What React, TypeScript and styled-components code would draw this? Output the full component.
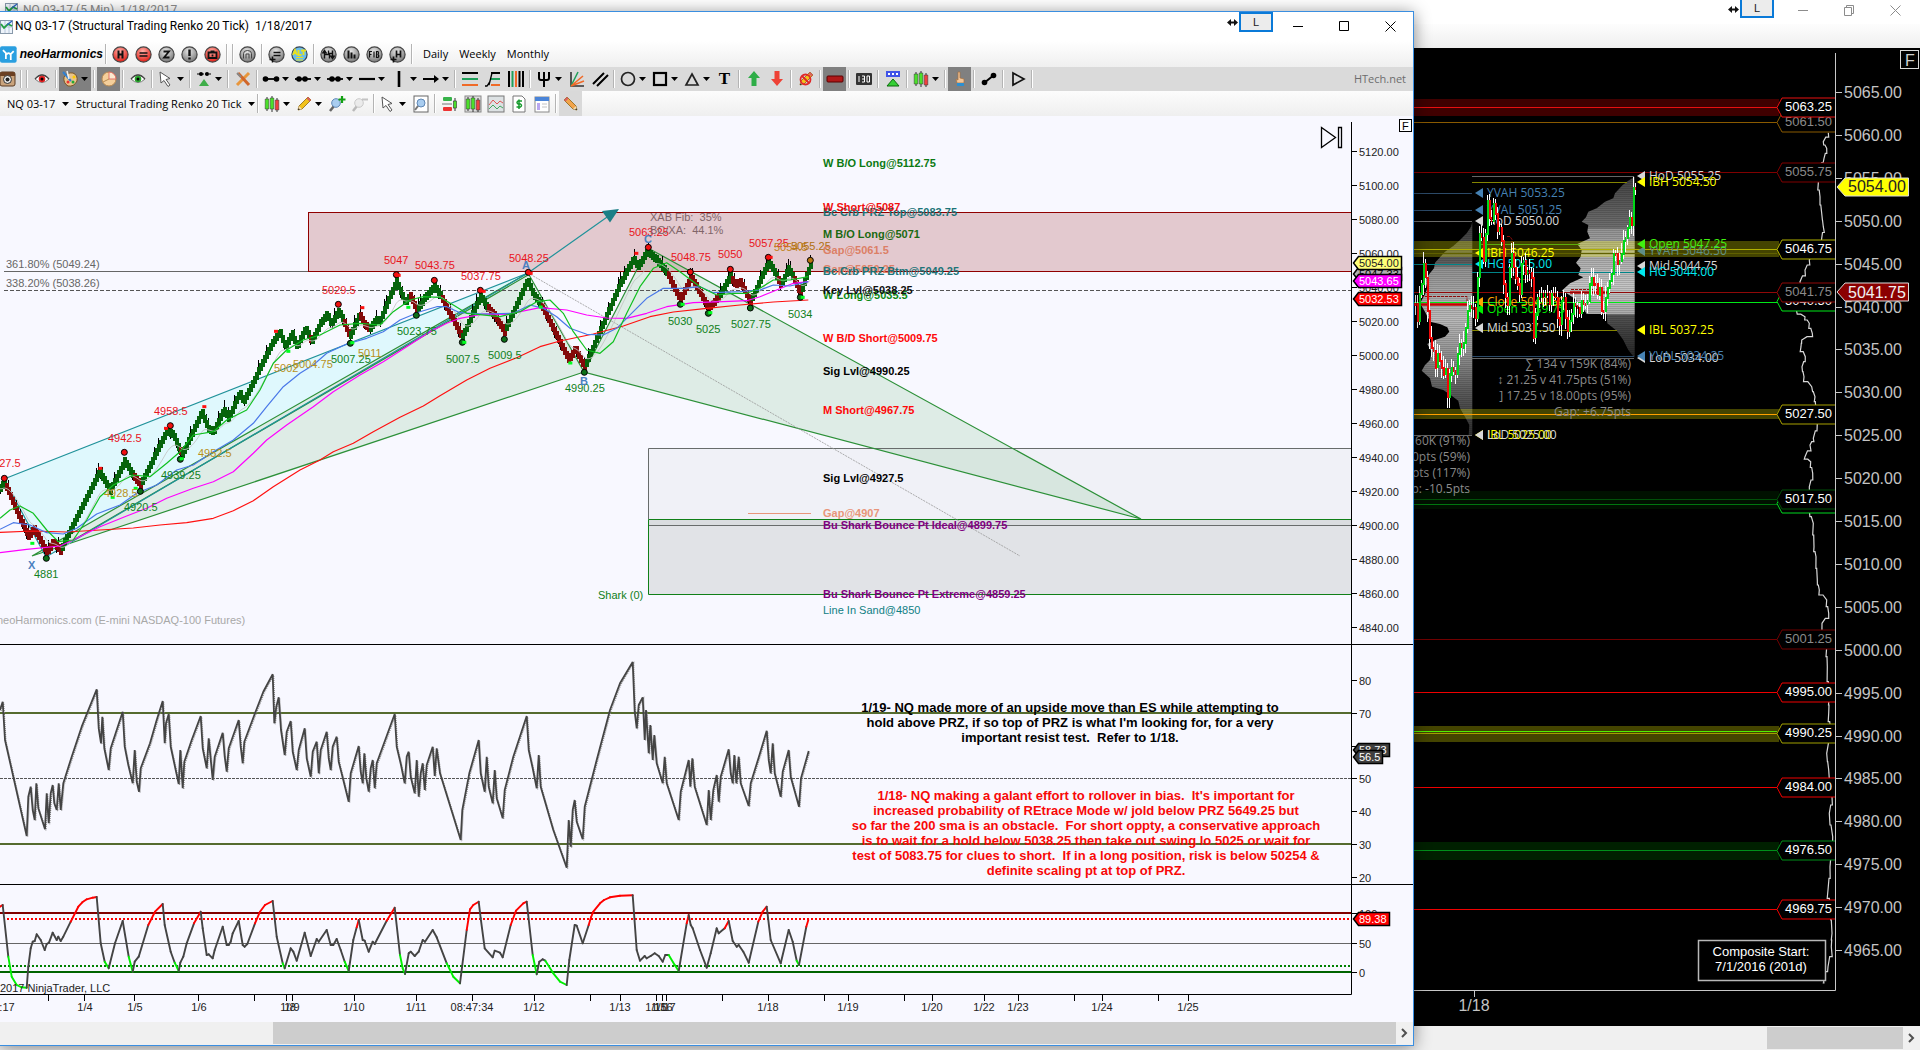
import React from "react";
import styled, { createGlobalStyle, css } from "styled-components";

type Pt = [number, number];

const UI = `"Open Sans", "Noto Sans", sans-serif`;
const TITLE = `Roboto, "Open Sans", sans-serif`;
const ARIAL = `"Liberation Sans", Arial, sans-serif`;

const Global = createGlobalStyle`
  * { box-sizing: border-box; }
  html, body, #root { height: 100%; }
  body { margin: 0; background: #000; overflow: hidden; font-family: ${UI}; }
`;

/* ------------------------------------------------------------------ */
/* Window chrome                                                       */
/* ------------------------------------------------------------------ */

const Desktop = styled.div`
  position: relative;
  height: 100vh;
  overflow: hidden;
`;

const BackWindow = styled.section`
  display: flex;
  flex-direction: column;
  height: 100%;
  background: #fff;
`;

const FrontWindow = styled.section`
  position: absolute;
  top: 11px;
  bottom: 4px;
  left: 0;
  right: 506px;
  display: flex;
  flex-direction: column;
  background: #fff;
  border: 1px solid #3a8ee0;
  border-left: 0;
  box-shadow: 0 2px 16px rgba(0, 0, 0, 0.45);
`;

const TitleBar = styled.header<{ $back?: boolean }>`
  display: flex;
  align-items: ${(p) => (p.$back ? "flex-start" : "stretch")};
  flex: none;
  height: ${(p) => (p.$back ? "24px" : "29px")};
  padding-right: ${(p) => (p.$back ? "2px" : "0")};
  color: ${(p) => (p.$back ? "#8c8c8c" : "#000")};
  background: #fff;
`;

const TitleIcon = styled.span<{ $back?: boolean }>`
  display: flex;
  align-items: center;
  width: ${(p) => (p.$back ? "23px" : "15px")};
  height: ${(p) => (p.$back ? "20px" : "29px")};
  justify-content: ${(p) => (p.$back ? "center" : "flex-start")};
  overflow: hidden;
`;

const Title = styled.h1<{ $back?: boolean }>`
  flex: 1;
  margin: 0;
  font: 400 12px/${(p) => (p.$back ? "21px" : "29px")} ${TITLE};
  white-space: pre;
`;

const LinkButton = styled.button<{ $back?: boolean }>`
  width: 34px;
  height: ${(p) => (p.$back ? "18px" : "20px")};
  margin-right: ${(p) => (p.$back ? "6px" : "2px")};
  padding: 0;
  border: 2px solid #0a7ad8;
  border-top-width: ${(p) => (p.$back ? "0" : "2px")};
  background: #ececec;
  color: #222;
  font: 400 11px/14px ${ARIAL};
`;

const Grip = styled.span<{ $back?: boolean }>`
  display: flex;
  align-items: center;
  width: 12px;
  height: ${(p) => (p.$back ? "18px" : "20px")};
`;

const WindowButton = styled.button<{ $back?: boolean }>`
  display: flex;
  align-items: center;
  justify-content: center;
  width: 46px;
  height: ${(p) => (p.$back ? "20px" : "29px")};
  padding: 0;
  border: 0;
  background: none;
  color: inherit;
`;

const Bar = styled.div<{ $kind: "brand" | "draw" | "series" | "back" }>`
  display: flex;
  align-items: stretch;
  flex: none;
  overflow: hidden;
  ${(p) =>
    ({
      brand: css`height: 26px; background: linear-gradient(#fff, #efefef);`,
      draw: css`height: 24px; background: #dadada;`,
      series: css`height: 25px; background: linear-gradient(#fcfcfc, #efefef);`,
      back: css`height: 24px; background: linear-gradient(#fdfdfd, #efefef);`,
    })[p.$kind]}
`;

const Sep = styled.span`
  flex: none;
  width: 6px;
  margin: 3px 0;
  background: linear-gradient(#b4b4b4, #b4b4b4) 2px 0 / 1px 100% no-repeat,
    linear-gradient(#fff, #fff) 3px 0 / 1px 100% no-repeat;
`;

const Tool = styled.button<{ $menu?: boolean; $on?: boolean; $light?: boolean; $edge?: boolean }>`
  display: flex;
  flex: none;
  align-items: center;
  justify-content: center;
  gap: 3px;
  width: ${(p) => (p.$menu ? "32px" : "23px")};
  margin-left: ${(p) => (p.$edge ? "-5px" : "0")};
  padding: 0;
  border: 0;
  color: #000;
  background: ${(p) => (p.$on ? (p.$light ? "#d9d9d9" : "#808080") : "none")};
`;

const Brand = styled.a`
  display: flex;
  align-items: center;
  gap: 3px;
  width: 103px;
  color: #000;
  text-decoration: none;
  font: italic 700 12px/26px ${ARIAL};
`;

const TextButton = styled.button`
  margin-left: 5px;
  padding: 0 3px;
  border: 0;
  background: none;
  font: 400 11px/26px ${UI};
`;

const Vendor = styled.a`
  margin-left: auto;
  padding-right: 7px;
  color: #6d6d6d;
  font: 400 11px/23px ${UI};
  text-decoration: none;
`;

const Picker = styled.label`
  display: flex;
  align-items: center;
  gap: 6px;
  padding-left: 7px;
`;

const PickerSelect = styled.select`
  appearance: none;
  padding: 0;
  border: 0;
  background: none;
  color: #000;
  font: 400 11px/22px ${UI};
`;

const ScrollTrack = styled.div<{ $back?: boolean }>`
  display: flex;
  align-items: stretch;
  flex: none;
  height: ${(p) => (p.$back ? "24px" : "23px")};
  padding: ${(p) => (p.$back ? "1px 0" : "0 0 1px")};
  background: #f0f0f0;
`;

const ScrollThumb = styled.div<{ $back?: boolean }>`
  ${(p) => (p.$back ? css`width: 136px; margin-left: auto;` : css`flex: 1; margin-left: 273px;`)}
  background: #cdcdcd;
`;

const ScrollButton = styled.button`
  width: 17px;
  padding: 0;
  border: 0;
  background: #f0f0f0;
  color: #505050;
`;

const ChartArea = styled.main<{ $dark?: boolean }>`
  display: flex;
  flex: 1;
  min-height: 0;
  justify-content: flex-end;
  background: ${(p) => (p.$dark ? "#000" : "#f8f8ff")};
`;

const Canvas = styled.svg<{ $dark?: boolean }>`
  display: block;
  width: ${(p) => (p.$dark ? "506px" : "100%")};
  height: 100%;
`;

const Mark = styled.text<{ $size?: number; $bold?: boolean; $ui?: boolean }>`
  font-family: ${(p) => (p.$ui ? UI : ARIAL)};
  font-size: ${(p) => p.$size ?? 11}px;
  font-weight: ${(p) => (p.$bold ? 700 : 400)};
  white-space: pre;
`;

/* ------------------------------------------------------------------ */
/* Icons                                                               */
/* ------------------------------------------------------------------ */

const Caret = () => (
  <svg width="7" height="4" viewBox="0 0 7 4" aria-hidden="true">
    <path d="M0 0H7L3.5 4Z" />
  </svg>
);

const badges: Record<string, { red?: boolean; art: React.ReactNode }> = {
  H: { red: true, art: <path d="M6 4v8M10 4v8M6 8h4" strokeWidth="2" /> },
  levels: { red: true, art: <path d="M4 6.500h8M4 9.500h8" strokeWidth="1.600" /> },
  Z: { art: <path d="M5 5h5.500L5.500 11H11" strokeWidth="1.800" /> },
  alert: { art: <path d="M8 3v6.500M8 11v2" strokeWidth="2.400" /> },
  shot: { red: true, art: <path d="M4 6h8v5.500H4ZM6 5h4M8 8v2" strokeWidth="1.800" /> },
  magnet: { art: <path d="M4 12V7q0-3 4-3t4 3v5M6.500 12V7.500h3V12" stroke="#444" /> },
  note: { art: <path d="M5 6h7M5 9h7M1 13h6M4 10v6" strokeWidth="1.500" /> },
  swing: { art: <path d="M4 12V5M2 7l2-3 2 3M4 8h5v4M12 4v7M10 9l2 3 2-3M12 7H8V4" strokeWidth="1.400" /> },
  bars: { art: <path d="M5 4v8M8 6v6M11 8v4" strokeWidth="2" /> },
  fib: { art: <path d="M3 11V5h2.500M3 8h2M7.500 5v6M10 5v6h1.500q1.500-1.500 0-3 1-1.500 0-3Z" strokeWidth="1.200" /> },
  harm: { art: <path d="M7 4v7M11 4v7M7 8h4M1 13h6M4 10v6" strokeWidth="1.700" /> },
};

const Badge = ({ name }: { name: string }) => {
  const b = badges[name];
  const id = `badge-${name}`;
  return (
    <svg width="17" height="17" viewBox="0 0 17 17" aria-hidden="true">
      <defs>
        <radialGradient id={id} cx="45%" cy="30%" r="70%">
          <stop offset="0" stopColor={b.red ? "#ffb0a8" : "#e8e8e8"} />
          <stop offset="1" stopColor={b.red ? "#e01c14" : "#777"} />
        </radialGradient>
      </defs>
      <circle cx="8.500" cy="8.500" r="7.600" fill={`url(#${id})`} stroke="#444" strokeWidth="1.200" />
      <g transform="translate(.5 .5)" fill="none" stroke="#111">{b.art}</g>
    </svg>
  );
};

const Candles = () => (
  <g stroke="#333" strokeWidth=".5">
    <path d="M3 1v14M8 0v16M13 2v14" strokeWidth="1" />
    <path d="M1.200 3h3.600v10h-3.600ZM6.200 2h3.600v11h-3.600Z" fill="#4be02a" />
    <path d="M11.200 4h3.600v10h-3.600Z" fill="#f04040" />
  </g>
);

const Eye = ({ tint }: { tint: string }) => (
  <g>
    <path d="M1 8q7-8 14 0-7 7-14 0Z" fill="#fff" stroke="#777" />
    <path d="M1 8q7-8 14 0" fill="none" stroke="#444" strokeWidth="1.300" />
    <circle cx="8" cy="8" r="3.300" fill={tint} />
    <circle cx="8" cy="8" r="1.500" />
  </g>
);

const Pointer = () => (
  <path d="M2 1l1 11 3-2.500 4 6 2-1.500-4-5.500 4-1Z" fill="#fff" stroke="#555" />
);

const Pencil = ({ tip = "#f2c21b" }: { tip?: string }) => (
  <g>
    <path d="M2 14l1-4L12 1l3 3-9 9Z" fill={tip} stroke="#8a6412" strokeWidth=".8" />
    <path d="M2 14l1-4 3 3Z" fill="#f5deb3" />
    <path d="M12 1l3 3-1.500 1.500-3-3Z" fill="#d86060" />
    <path d="M2 14l.6-1.800 1.300 1.300Z" />
  </g>
);

const Lens = ({ faded, plus }: { faded?: boolean; plus?: boolean }) => (
  <g opacity={faded ? 0.4 : 1}>
    <path d="M5 10l-4 5" stroke="#666" strokeWidth="2.500" />
    <circle cx="7" cy="7" r="4.300" fill={faded ? "#ddd" : "#a9cdf0"} stroke={faded ? "#888" : "#5f87b5"} />
    {plus ? (
      <path d="M13 0v7M9.500 3.500h7" stroke="#12a012" strokeWidth="2.200" />
    ) : (
      <path d="M10 3.500h6" stroke="#777" strokeWidth="2" />
    )}
  </g>
);

const glyphs: Record<string, React.ReactNode> = {
  camera: (
    <g>
      <rect x="1" y="1" width="15" height="14" rx="2" fill="#c9a37c" stroke="#5b3b22" />
      <path d="M1 5h15v-2q0-2-2-2H3Q1 1 1 3Z" fill="#6b4023" />
      <circle cx="8.500" cy="8.500" r="4" fill="#eee" stroke="#333" />
      <circle cx="8.500" cy="8.500" r="2" fill="#222" />
    </g>
  ),
  eyeRed: <Eye tint="#e02020" />,
  eyeGreen: <Eye tint="#27a52c" />,
  palette: (
    <g>
      <path d="M2 6q3-5 9-4 5 2 4 8-3 6-9 5-5-3-4-9Z" fill="#e9c48b" stroke="#7a5526" />
      <circle cx="6" cy="11" r="1.500" fill="#e33" />
      <circle cx="11" cy="11" r="1.500" fill="#2a3" />
      <circle cx="12" cy="6" r="1.500" fill="#fc0" />
      <path d="M1 1l8 9" stroke="#2f7fd0" strokeWidth="2" />
      <path d="M5 0l2 8" stroke="#eee" strokeWidth="1.500" />
    </g>
  ),
  pie: (
    <g>
      <circle cx="8" cy="8" r="7" fill="#f4cf9b" stroke="#b78a52" />
      <path d="M8 8V1a7 7 0 0 1 7 7Z" fill="#fbe9cf" stroke="#d55" strokeWidth=".8" />
      <path d="M8 8l-6 3" stroke="#b78a52" />
    </g>
  ),
  pointer: <Pointer />,
  snap: (
    <g>
      <path d="M1 3h14" stroke="#000" strokeDasharray="3 1" />
      <circle cx="5" cy="3" r="2" />
      <circle cx="11" cy="3" r="2" />
      <path d="M8 8l5 7H3Z" fill="#3fae49" />
    </g>
  ),
  cross: (
    <g strokeWidth="3">
      <path d="M2 14L14 2" stroke="#e8963c" />
      <path d="M3 2l11 12" stroke="#d0662a" />
      <path d="M2 2l4 4" stroke="#888" strokeWidth="2" />
    </g>
  ),
  horizontal: <path d="M0 8h16" stroke="#000" strokeWidth="2.200" />,
  vertical: <path d="M8 0v16" stroke="#000" strokeWidth="2.600" />,
  arrow: <path d="M0 7h11V4l5 4-5 4V9H0Z" />,
  retrace: (
    <g strokeWidth="2">
      <path d="M0 2h16" stroke="#000" />
      <path d="M0 8h16" stroke="#1fa05a" />
      <path d="M0 14h16" stroke="#f06a28" />
    </g>
  ),
  extension: (
    <g fill="none" strokeWidth="2">
      <path d="M6 2h9" stroke="#000" />
      <path d="M6 8h9" stroke="#1fa05a" />
      <path d="M6 14h9" stroke="#f06a28" />
      <path d="M0 15h2l2-3v2l3-12" stroke="#000" strokeWidth="1.300" />
    </g>
  ),
  timeFib: (
    <g strokeWidth="2">
      <path d="M1 0v16M15 0v16" stroke="#000" />
      <path d="M4.500 0v16" stroke="#1fa05a" />
      <path d="M8 0v16" stroke="#f06a28" />
      <path d="M11.500 0v16" stroke="#000" />
    </g>
  ),
  fork: <path d="M3 1v6q0 2 2 2h6q2 0 2-2V1M8 1v15" fill="none" stroke="#000" strokeWidth="2" />,
  gann: (
    <g fill="none" strokeWidth="1.600">
      <path d="M2 1v14h13" stroke="#333" />
      <path d="M2 15L9 1" stroke="#1fa05a" />
      <path d="M2 15L14 5M2 15l13-5" stroke="#f06a28" />
    </g>
  ),
  parallel: <path d="M1 13L12 2M5 15L16 4" stroke="#000" strokeWidth="2" />,
  ellipse: <circle cx="8" cy="8" r="6.500" fill="none" stroke="#222" strokeWidth="1.700" />,
  rectangle: <rect x="2" y="2" width="12" height="12" fill="none" stroke="#000" strokeWidth="2.200" />,
  triangle: <path d="M8 3l6 11H2Z" fill="none" stroke="#222" strokeWidth="1.700" />,
  up: <path d="M8 0l6 7h-3.500v8h-5V7H2Z" fill="#2fae48" />,
  down: <path d="M8 15L2 8h3.500V0h5v8H14Z" fill="#ee4236" />,
  erase: (
    <g>
      <Pencil />
      <circle cx="7.500" cy="8.500" r="5" fill="none" stroke="#e02828" strokeWidth="1.800" />
      <path d="M4 5l7 7" stroke="#e02828" strokeWidth="1.800" />
    </g>
  ),
  ruler: <rect x="0" y="5" width="16" height="6" rx="1" fill="#b01818" stroke="#5a0000" />,
  counter: (
    <g>
      <rect x="0" y="2" width="16" height="12" rx="1" fill="#333" />
      <path d="M3 5v6M6 5h2.500v3H6M8.500 8v3H6M11 5h2.500v6H11V5" stroke="#fff" fill="none" />
    </g>
  ),
  marker: (
    <g>
      <rect x="1" y="0" width="14" height="6" fill="#4054e8" />
      <path d="M3 3h2M7 3h2M11 3h2" stroke="#fff" strokeWidth="2" />
      <path d="M8 8l6 7H2Z" fill="#35cf35" stroke="#0b6b0b" />
    </g>
  ),
  candles: <Candles />,
  hand: (
    <g>
      <path d="M6 1h2v6l4 1v4H5L4 8l2 1Z" fill="#f0c59a" stroke="#a6713f" strokeWidth=".7" />
      <path d="M5 12h7v3H5Z" fill="#2d8fd0" />
    </g>
  ),
  bone: (
    <g>
      <path d="M3 12L13 4" stroke="#000" strokeWidth="2" />
      <circle cx="3.500" cy="11.500" r="2.800" />
      <circle cx="12.500" cy="4.500" r="2.800" />
    </g>
  ),
  play: <path d="M3 2l11 6L3 14Z" fill="none" stroke="#111" strokeWidth="1.700" />,
  pencil: <Pencil />,
  pencilBack: (
    <g transform="translate(16 0) scale(-1 1)">
      <Pencil tip="#f2a44a" />
    </g>
  ),
  zoomIn: <Lens plus />,
  zoomOut: <Lens faded />,
  docLens: (
    <g>
      <rect x="1" y="0" width="14" height="16" fill="#fff" stroke="#666" />
      <circle cx="8" cy="7" r="4" fill="#a9cdf0" stroke="#5f87b5" />
      <path d="M5 10l-3 4" stroke="#777" strokeWidth="2" />
    </g>
  ),
  trader: (
    <g>
      <rect x="1" y="1" width="9" height="4" rx="1" fill="#37b34a" />
      <rect x="1" y="11" width="9" height="4" rx="1" fill="#e33" />
      <path d="M0 8h10" stroke="#777" />
      <path d="M13 2v13" stroke="#333" />
      <rect x="11.500" y="5" width="3" height="7" fill="#4be02a" stroke="#333" strokeWidth=".6" />
    </g>
  ),
  series: (
    <g>
      <rect x="0" y="0" width="16" height="16" fill="#ddd" stroke="#888" />
      <Candles />
    </g>
  ),
  indicator: (
    <g fill="none">
      <rect x="0" y="0" width="16" height="16" fill="#dde2e4" stroke="#777" />
      <path d="M1 9l4-5 4 4 3-3 3 2" stroke="#e05555" />
      <path d="M1 13l4-4 4 4 3-3 3 2" stroke="#44a860" />
    </g>
  ),
  dollar: (
    <g fill="none">
      <path d="M2 0h9l3 3v13H2Z" fill="#fff" stroke="#777" />
      <path d="M11 5H7q-2 1.500 0 3h2.500q2 1.500 0 3H5.500M8 3.500v9.500" stroke="#159a2c" strokeWidth="1.500" />
    </g>
  ),
  sheet: (
    <g>
      <rect x="1" y="1" width="14" height="15" fill="#fff" stroke="#888" />
      <path d="M1 3h14" stroke="#4a84d8" strokeWidth="4" />
      <path d="M3 7h3v7H3Z" fill="#b9a7f0" />
      <path d="M8 8h5M8 11h5" stroke="#c4c4c4" />
    </g>
  ),
};

const nodeLine = (marks: number[]) => (
  <g>
    <path d="M0 8h16" stroke="#000" strokeWidth="1.800" />
    {marks.map((m) => (
      <circle key={m} cx={m} cy="8" r="2.800" />
    ))}
  </g>
);
glyphs.segment = nodeLine([2.5, 13.5]);
glyphs.ray = nodeLine([4, 10]);
glyphs.extended = nodeLine([5, 11]);

const Glyph = ({ name }: { name: string }) => (
  <svg width="16" height="16" viewBox="0 0 16 16" aria-hidden="true" overflow="visible">
    {glyphs[name]}
  </svg>
);

const TextGlyph = styled.span`
  font: 700 17px/20px "Liberation Serif", serif;
`;

const ChartGlyph = () => (
  <svg width="14" height="14" viewBox="0 0 14 14" aria-hidden="true">
    <rect x=".5" y=".5" width="12" height="13" fill="#eef4fb" stroke="#8899aa" />
    <path d="M1 7h12M5 1v12M9 1v12" stroke="#b8c8dc" />
    <path d="M1 4l3 4 4-4 4 2" fill="none" stroke="#22a040" strokeWidth="1.800" />
    <path d="M7 5l5-4" stroke="#2a60c0" strokeWidth="1.500" />
  </svg>
);

const GripGlyph = () => (
  <svg width="11" height="9" viewBox="0 0 11 9" aria-hidden="true">
    <path d="M0 4.500L4 1v2.500h3V1l4 3.500L7 8V5.500H4V8Z" fill="#111" />
  </svg>
);

const WindowControls = ({ back }: { back?: boolean }) => (
  <>
    <Grip $back={back}>
      <GripGlyph />
    </Grip>
    <LinkButton $back={back}>L</LinkButton>
    <WindowButton $back={back} aria-label="Minimize">
      <svg width="11" height="11" viewBox="0 0 11 11"><path d="M0 5.500h10" stroke="currentColor" /></svg>
    </WindowButton>
    <WindowButton $back={back} aria-label={back ? "Restore" : "Maximize"}>
      <svg width="11" height="11" viewBox="0 0 11 11" fill="none" stroke="currentColor">
        {back ? <path d="M.5 2.500h7v8h-7ZM2.500 2.500v-2h7v8h-2" /> : <path d="M.5 .5h9v9h-9Z" />}
      </svg>
    </WindowButton>
    <WindowButton $back={back} aria-label="Close">
      <svg width="11" height="11" viewBox="0 0 11 11"><path d="M.5 .5l10 10M10.500 .5l-10 10" stroke="currentColor" /></svg>
    </WindowButton>
  </>
);

/* ------------------------------------------------------------------ */
/* Toolbars                                                            */
/* ------------------------------------------------------------------ */

type ToolItem = { name: string; menu?: boolean; on?: boolean; edge?: boolean };
type Item = string | ToolItem;
const m = (name: string, on = false) => ({ name, menu: true, on });
const on = (name: string) => ({ name, on: true });

const drawTools: Item[] = [
  { name: "camera", edge: true }, "|", "|", "eyeRed", "|", m("palette", true), "|", on("pie"), "|",
  "eyeGreen", "|", m("pointer"), "|", m("snap"), "|", "cross", "|",
  m("segment"), m("ray"), m("extended"), m("horizontal"), m("vertical"), m("arrow"), "|",
  "retrace", "extension", "timeFib", "|", m("fork"), "gann", "parallel", "|",
  m("ellipse"), m("rectangle"), m("triangle"), "T", "|", "up", "down", "|", "erase", "|",
  on("ruler"), "|", "counter", "|", "marker", "|", m("candles"), "|", on("hand"), "|", "bone", "|", "play", "|",
];

const seriesTools: Item[] = [
  "|", m("candles"), m("pencil"), "zoomIn", "zoomOut", "|", m("pointer"), "docLens", "|",
  "trader", "series", "indicator", "dollar", "sheet", "|", on("pencilBack"),
];

const Tools = ({ items, light }: { items: Item[]; light?: boolean }) => (
  <>
    {items.map((it, i) => {
      if (it === "|") return <Sep key={i} />;
      const o: ToolItem = typeof it === "string" ? { name: it } : it;
      return (
        <Tool key={i} $menu={o.menu} $on={o.on} $edge={o.edge} $light={light} aria-label={o.name === "T" ? undefined : o.name}>
          {o.name === "T" ? <TextGlyph>T</TextGlyph> : <Glyph name={o.name} />}
          {o.menu && <Caret />}
        </Tool>
      );
    })}
  </>
);

const BadgeTools = ({ names }: { names: string[] }) => (
  <>
    {names.map((n) => (
      <Tool key={n} aria-label={n}><Badge name={n} /></Tool>
    ))}
  </>
);

/* ------------------------------------------------------------------ */
/* Series data. Coordinates are in thirds of a chart unit.             */
/* ------------------------------------------------------------------ */

const third = (pts: Pt[], oy: number, ox = 0): Pt[] => pts.map(([x, y]) => [ox + x / 3, oy + y / 3]);
const shift = (pts: number[][], dx = 1320) => pts.map(([x, ...r]) => [x + dx, ...r]);
const line = (pts: Pt[]) => "M" + pts.map(([x, y]) => `${x.toFixed(1)} ${y.toFixed(1)}`).join("L");
const noise = (i: number) => {
  const v = Math.sin(i * 127.1 + 11.7) * 43758.5453;
  return v - Math.floor(v);
};

/* third value 1 marks a bearish leg */
const swing: number[][] = [
  [0, 925], [12, 905], [45, 985, 1], [85, 1070, 1], [100, 1045, 1], [115, 1070, 1], [140, 1118, 1], [158, 1085, 1], [180, 1112, 1],
  [205, 1060], [297, 875], [330, 932], [373, 842], [397, 885], [420, 915, 1], [500, 752], [520, 765], [534, 800], [545, 825, 1],
  [605, 695], [622, 745], [640, 755], [670, 690], [685, 715], [718, 638], [730, 665], [815, 490], [838, 455], [855, 500], [875, 460],
  [890, 500], [915, 445], [925, 465], [934, 485, 1], [960, 430], [980, 402], [992, 432], [1015, 395], [1027, 415], [1048, 470, 1], [1078, 402], [1090, 430, 1],
  [1108, 448, 1], [1125, 420], [1140, 420], [1188, 302], [1215, 370], [1228, 345], [1250, 390, 1], [1272, 355], [1303, 318], [1320, 345], [1385, 472, 1],
  ...shift([
    [120, 348], [140, 380], [165, 410, 1], [192, 455, 1], [262, 300], [280, 345], [302, 372], [340, 450, 1], [385, 540, 1], [405, 505, 1], [432, 562, 1],
    [540, 310], [580, 235], [592, 262], [620, 215], [650, 240], [680, 278], [720, 360, 1], [752, 290, 1], [805, 385, 1], [835, 350, 1], [870, 288],
    [885, 315, 1], [900, 305, 1], [930, 365, 1], [985, 245], [1012, 295], [1022, 315, 1], [1045, 265], [1060, 295], [1080, 340, 1], [1111, 252],
  ]),
];

type Brick = { x: number; y: number; bear: boolean };
const bricks: Brick[] = [];
for (let x = 0; x <= 2430; x += 6) {
  const k = Math.max(1, swing.findIndex((p) => p[0] >= x));
  const [a, b] = [swing[k - 1], swing[k]];
  const t = (x - a[0]) / (b[0] - a[0] || 1);
  bricks.push({ x: x / 3, y: 180 + (a[1] + (b[1] - a[1]) * t) / 3, bear: b[2] === 1 });
}
const trail = bricks.reduce<Pt[]>((acc, b, i) => {
  const prev = i ? acc[i - 1][1] : b.y;
  acc.push([b.x, prev + (b.y + 3 - prev) * 0.16]);
  return acc;
}, []);

const averages: { color: string; pts: number[][] }[] = [
  { color: "#ff1010", pts: [[0,1057],[100,1053],[200,1056],[300,1050],[400,1044],[480,1035],[560,1028],[640,1015],[700,992],[760,962],[820,920],[900,870],[960,840],[1000,815],[1060,790],[1120,755],[1200,712],[1270,678],[1320,647],...shift([[80,600],[150,565],[230,533],[300,500],[360,483],[460,462],[550,438],[630,410],[700,396],[800,385],[900,375],[1000,366],[1105,360]])] },
  { color: "#ff00ff", pts: [[0,1118],[80,1108],[180,1098],[230,1075],[300,1040],[380,1008],[440,985],[500,955],[580,925],[640,905],[700,875],[760,820],[800,780],[860,735],[940,680],[1000,635],[1080,585],[1150,545],[1220,500],[1290,455],[1340,430],...shift([[60,415],[130,402],[200,403],[300,383],[380,390],[440,405],[500,414],[560,415],[620,400],[680,380],[760,368],[850,365],[920,362],[960,350],[1010,330],[1060,310],[1105,305]])] },
  { color: "#4a78e8", pts: [[0,1048],[40,1028],[90,1035],[140,1058],[190,1062],[230,1045],[290,1002],[360,975],[410,940],[470,915],[530,870],[580,855],[640,815],[700,780],[760,730],[800,680],[850,620],[900,580],[940,555],[980,520],[1040,492],[1100,475],[1150,455],[1200,420],[1260,395],[1310,380],[1340,380],...shift([[60,398],[130,402],[220,400],[270,375],[310,385],[350,410],[390,445],[440,463],[490,465],[530,445],[580,395],[620,355],[670,325],[730,325],[780,320],[820,338],[900,335],[960,330],[1000,315],[1050,318],[1105,305]])] },
  { color: "#10c020", pts: [[0,1015],[30,990],[60,978],[100,1000],[140,1050],[175,1085],[220,1080],[260,1020],[300,950],[340,915],[400,885],[450,890],[500,850],[540,815],[580,765],[640,755],[680,720],[740,690],[780,630],[820,550],[860,510],[910,480],[960,465],[1020,435],[1080,430],[1140,435],[1180,395],[1230,360],[1270,350],...shift([[0,352],[40,375],[80,400],[180,410],[240,395],[290,365],[330,360],[370,400],[400,455],[440,510],[480,520],[520,485],[560,400],[600,320],[640,265],[680,248],[720,275],[780,320],[830,345],[880,340],[920,340],[960,325],[1000,300],[1050,300],[1105,290]])] },
];

const rsi: number[][] = [
  [0,210],[8,185],[15,300],[80,588],[85,470],[92,440],[98,510],[104,540],[109,430],[115,505],[135,568],[140,460],[146,550],[152,460],[158,435],[163,490],[170,510],[176,430],[182,510],[190,430],[215,350],[245,260],[290,148],[296,265],[303,310],[307,230],[313,325],[326,390],[332,325],[368,215],[374,320],[385,375],[398,430],[404,330],[410,425],[417,455],[422,385],[450,310],[470,240],[488,183],[494,310],[498,250],[506,222],[512,320],[536,432],[541,330],[548,445],[553,365],[575,300],[602,228],[608,325],[620,385],[626,295],[638,420],[644,350],[668,278],[674,350],[680,395],[686,325],[716,240],[722,320],[728,370],[733,305],[765,220],[790,155],[818,103],[823,250],[829,200],[836,172],[843,270],[854,345],[860,275],[872,243],[878,335],[890,390],[896,330],[914,265],[920,355],[932,410],[938,335],[950,305],[956,400],[962,330],[980,275],[986,355],[992,390],[998,320],[1010,290],[1016,365],[1030,420],[1046,485],[1052,400],[1076,318],[1082,395],[1088,430],[1093,340],[1099,415],[1106,455],[1112,385],[1118,360],[1124,445],[1130,370],[1184,222],[1190,320],[1203,375],[1214,430],[1220,350],[1226,335],[1232,410],[1244,460],[1250,360],[1256,470],[1262,400],[1268,370],[1274,450],[1280,375],[1298,320],[1304,408],[1310,325],[1320,400],[1382,600],[1387,510],[1408,400],[1436,300],
  ...shift([[122,400],[134,455],[140,350],[146,440],[158,490],[164,390],[170,475],[188,535],[194,450],[220,350],[260,228],[266,330],[278,385],[290,445],[296,345],[302,440],[340,570],[380,683],[386,540],[392,620],[398,510],[404,480],[410,545],[428,598],[434,500],[470,360],[510,210],[540,130],[578,66],[584,215],[590,265],[596,195],[608,172],[614,300],[618,210],[626,340],[631,255],[638,360],[643,285],[650,370],[668,430],[674,350],[680,430],[716,540],[722,455],[746,360],[751,440],[757,355],[764,440],[800,555],[806,450],[812,540],[820,450],[830,405],[836,485],[842,410],[866,328],[872,400],[878,430],[883,345],[889,430],[896,350],[902,430],[926,498],[932,430],[960,340],[980,272],[986,360],[992,400],[998,310],[1004,400],[1022,470],[1028,395],[1046,330],[1052,410],[1077,500],[1083,415],[1106,333]]),
];

const stoch: number[][] = [
  [0,800],[8,795],[25,950],[35,1010],[50,1035],[65,1042],[80,1043],[85,980],[92,925],[98,905],[104,903],[110,883],[122,900],[134,930],[140,912],[147,908],[158,878],[170,900],[175,890],[182,903],[190,890],[212,845],[235,800],[247,787],[260,778],[278,773],[290,771],[302,910],[314,965],[326,985],[345,910],[368,843],[386,950],[398,995],[404,965],[416,950],[445,855],[465,815],[488,792],[494,855],[512,935],[524,968],[536,993],[541,968],[550,950],[560,910],[582,850],[602,815],[608,865],[620,945],[626,943],[638,955],[644,930],[668,860],[680,915],[686,915],[692,905],[698,880],[716,843],[728,915],[734,920],[742,912],[765,850],[780,815],[795,795],[818,783],[830,890],[848,970],[854,985],[872,925],[880,935],[890,962],[914,878],[932,948],[950,897],[956,905],[980,870],[992,915],[1000,915],[1010,897],[1022,930],[1034,965],[1046,993],[1060,900],[1070,862],[1076,840],[1088,900],[1094,902],[1106,935],[1118,905],[1124,912],[1160,842],[1184,803],[1200,945],[1208,985],[1215,1002],[1226,940],[1232,935],[1244,948],[1256,935],[1268,900],[1275,905],[1298,870],[1310,892],[1340,970],[1360,1010],[1380,1030],[1400,870],[1410,808],[1420,795],[1436,785],
  ...shift([[122,835],[134,925],[158,952],[164,932],[180,938],[188,952],[212,855],[228,812],[250,790],[260,785],[278,945],[290,1003],[298,965],[308,958],[316,962],[340,1000],[360,1025],[380,1035],[388,960],[404,855],[410,857],[428,910],[446,855],[453,832],[460,815],[480,790],[492,780],[510,772],[540,767],[578,766],[590,930],[600,962],[614,948],[620,955],[632,948],[644,940],[656,948],[668,965],[676,945],[686,945],[704,975],[716,993],[740,850],[746,825],[752,855],[758,865],[780,930],[800,983],[812,940],[830,865],[836,880],[854,865],[866,843],[878,903],[890,920],[896,915],[910,935],[926,968],[955,845],[968,815],[980,800],[992,900],[1022,970],[1046,870],[1058,905],[1070,962],[1077,975],[1099,860],[1105,840]]),
];

const stochRuns = stoch.slice(1).map((b, i) => {
  const a = stoch[i];
  const falling = b[1] > a[1];
  const color =
    !falling && a[1] < 872 && b[1] < 846 ? "#ff0000" : falling && a[1] > 943 && b[1] > 970 ? "#00f000" : "#444";
  return { d: line(third([a as Pt, b as Pt], 640)), color };
});

type Label = [string, number, number, string];
const RED = "#e8141c", GREEN = "#108020", GOLD = "#b8901c";
/* text, left edge, vertical middle, colour */
const swingLabels: Label[] = [
  ["4927.5", -13, 463, RED], ["4942.5", 108, 438, RED], ["4958.5", 154, 411, RED], ["5029.5", 322, 290, RED],
  ["5047", 384, 260, RED], ["5043.75", 415, 265, RED], ["5037.75", 461, 276, RED], ["5048.25", 509, 258, RED],
  ["5063.25", 629, 232, RED], ["5048.75", 671, 257, RED], ["5050", 718, 254, RED], ["5057.25", 749, 243, RED],
  ["4881", 34, 574, GREEN], ["4920.5", 124, 507, GREEN], ["4939.25", 161, 475, GREEN], ["5007.25", 331, 359, GREEN],
  ["5023.75", 397, 331, GREEN], ["5007.5", 446, 359, GREEN], ["5009.5", 488, 355, GREEN], ["4990.25", 565, 388, GREEN],
  ["5030", 668, 321, GREEN], ["5025", 696, 329, GREEN], ["5027.75", 731, 324, GREEN], ["5034", 788, 314, GREEN],
  ["4928.5", 104, 493, GOLD], ["4952.5", 198, 453, GOLD], ["5002", 274, 368, GOLD], ["5004.75", 293, 364, GOLD],
  ["5011", 358, 353, GOLD], ["5054.5", 774, 247, "#c08018"], ["5055.25", 791, 246, "#b07010"],
];

const dots: [number, number, string][] = [
  [13, 895, "#f01010"], [373, 817, "#f01010"], [511, 737, "#f01010"], [1015, 373, "#f01010"], [1189, 284, "#f01010"], [1303, 301, "#f01010"],
  [1441, 331, "#f01010"], [1585, 277, "#f01010"], [1945, 202, "#f01010"], [2071, 276, "#f01010"], [2191, 268, "#f01010"], [2305, 232, "#f01010"],
  [2431, 241, "#b87410"], [139, 1135, "#0c7018"], [421, 934, "#0c7018"], [541, 838, "#0c7018"], [1051, 490, "#0c7018"], [1249, 406, "#0c7018"],
  [1387, 487, "#0c7018"], [1513, 478, "#0c7018"], [1753, 577, "#0c7018"], [2041, 373, "#0c7018"], [2125, 400, "#0c7018"], [2251, 384, "#0c7018"], [2401, 352, "#0c7018"],
];
const flags: [number, number, string][] = [
  [301, 865, "#ff1010"], [498, 745, "#ff1010"], [613, 680, "#ff1010"], [828, 454, "#ff1010"], [1087, 383, "#ff1010"], [1909, 220, "#ff1010"],
  [1196, 286, "#ff1010"], [1451, 334, "#ff1010"], [1592, 280, "#ff1010"], [2312, 232, "#ff1010"],
  [97, 1090, "#00ff20"], [338, 952, "#00ff20"], [407, 925, "#00ff20"], [545, 836, "#00ff20"], [865, 514, "#00ff20"], [1057, 488, "#00ff20"], [1225, 382, "#00ff20"],
  [1393, 487, "#00ff20"], [1622, 381, "#00ff20"], [1711, 549, "#00ff20"], [2048, 373, "#00ff20"], [2131, 398, "#00ff20"], [2408, 352, "#00ff20"],
];

const levels: [string, number, string][] = [
  ["W B/O Long@5112.75", 163, "#0b7a12"], ["Bc Crb PRZ Top@5083.75", 212, "#1c7478"], ["W Short@5087", 207, "#f01010"],
  ["M B/O Long@5071", 234, "#1a6a12"], ["Gap@5061.5", 250, "#dc7f66"], ["Gap@5050.25", 269, "#dc7f66"], ["Bc Crb PRZ Btm@5049.25", 271, "#1c7478"],
  ["W Long@5035.5", 295, "#0b8a12"], ["Key Lvl@5038.25", 290, "#111"], ["W B/D Short@5009.75", 338, "#ff0808"], ["Sig Lvl@4990.25", 371, "#000"],
  ["M Short@4967.75", 410, "#ff0808"], ["Sig Lvl@4927.5", 478, "#000"], ["Gap@4907", 513, "#e8957a"],
  ["Bu Shark Bounce Pt Ideal@4899.75", 525, "#800080"], ["Bu Shark Bounce Pt Extreme@4859.25", 594, "#800080"],
];

const dates: [string, number][] = [
  [":17", 7], ["1/4", 85], ["1/5", 135], ["1/6", 199], ["1/8", 288], ["1/9", 292], ["1/10", 354], ["1/11", 416], ["08:47:34", 472], ["1/12", 534],
  ["1/13", 620], ["1/15", 656], ["1/16", 662], ["1/17", 665], ["1/18", 768], ["1/19", 848], ["1/20", 932], ["1/22", 984], ["1/23", 1018], ["1/24", 1102], ["1/25", 1188],
];
const dateTicks = [48, 84, 134, 198, 254, 286, 292, 354, 416, 472, 534, 590, 620, 656, 662, 666, 722, 768, 824, 848, 904, 932, 984, 1018, 1074, 1102, 1158, 1188];

const AxisTag = ({ y, w, fill, ink = "#fff", children }: { y: number; w: number; fill: string; ink?: string; children: string }) => (
  <g>
    <path d={`M1353.500 ${y}l5-6.500h${w}v13h-${w}Z`} fill={fill} stroke="#000" strokeWidth="1.500" />
    <Mark x="1359" y={y + 4} fill={ink}>{children}</Mark>
  </g>
);

const noteBlack = [
  "1/19- NQ made more of an upside move than ES while attempting to",
  "hold above PRZ, if so top of PRZ is what I'm looking for, for a very",
  "important resist test.  Refer to 1/18.",
];
const noteRed = [
  "1/18- NQ making a galant effort to rollover in bias.  It's important for",
  "increased probability of REtrace Mode w/ jold below PRZ 5649.25 but",
  "so far the 200 sma is an obstacle.  For short oppty, a conservative approach",
  "is to wait for a hold below 5038.25 then take out swing lo 5025 or wait for",
  "test of 5083.75 for clues to short.  If in a long position, risk is below 50254 &",
  "definite scaling pt at top of PRZ.",
];

const RenkoChart = () => (
  <Canvas viewBox="0 116 1413 906" preserveAspectRatio="xMinYMin meet" role="img" aria-label="NQ 03-17 Renko chart">
    {/* harmonic patterns */}
    <path d="M4 479L528 273 46 557Z" fill="#dff8fd" />
    <path d="M32 556L528 273 584 372Z" fill="#deece6" />
    <path d="M584 372L648 248 1141 519Z" fill="#deece6" />
    <rect x="648" y="448" width="703" height="77" fill="#708070" fillOpacity=".06" />
    <rect x="648" y="519" width="703" height="75" fill="#687468" fillOpacity=".16" />
    <path d="M648.500 519V448.500H1351M648 525.500H1351" fill="none" stroke="#686c6c" />
    <path d="M1351 519.500H648.500V594.500H1351" fill="none" stroke="#108018" />
    <rect x="308.500" y="212.500" width="1043" height="59" fill="#8b0000" fillOpacity=".19" stroke="#900000" />
    <g fill="none" stroke="#2c9038" strokeWidth="1.200">
      <path d="M32 556L528 273 584 372ZM584 372L648 248 1141 519ZM70 542L528 275" />
    </g>
    <path d="M4 479L528 273M4 479L46 557L528 273M528 273L610 215" fill="none" stroke="#20929a" strokeWidth="1.200" />
    <path d="M619 209l-9 13.500-8-11.500Z" fill="#1b7f86" />
    <path d="M4 271.500H308" stroke="#666" />
    <path d="M4 290.500H1351" stroke="#555" strokeDasharray="4 2" />
    <path d="M528 273L1020 556" stroke="#999" strokeDasharray="2 1" opacity=".8" />
    <path d="M748 513.500h63" stroke="#e8957a" />

    {/* renko bricks with wicks */}
    <g stroke="#000">
      {bricks.map((b, i) => {
        const n = noise(i);
        const long = n > 0.82 ? 7 * n : 0;
        return n > 0.62 ? (
          <path key={i} d={`M${Math.round(b.x) + 0.5} ${Math.round(b.y - 4 - long)}v${Math.round(n > 0.82 ? 14 : 10 * n + 3)}`} />
        ) : null;
      })}
    </g>
    {bricks.map((b, i) => (
      <rect key={i} x={Math.round(b.x) - 1} y={Math.round(b.y) - 4} width="4" height="8" fill={b.bear ? "#840a0a" : "#06640c"} />
    ))}
    <path d={line(trail)} fill="none" stroke="#c4c4c4" opacity=".85" />
    {averages.map((a) => (
      <path key={a.color} d={line(third(a.pts as Pt[], 180))} fill="none" stroke={a.color} strokeWidth="1.200" strokeLinejoin="round" />
    ))}
    {dots.map(([x, y, c]) => (
      <circle key={`${x}-${y}`} cx={x / 3} cy={180 + y / 3} r="3" fill={c} stroke="#000" />
    ))}
    {flags.map(([x, y, c]) => (
      <rect key={`${x}-${y}`} x={x / 3 - 2} y={178.5 + y / 3} width="4" height="3" fill={c} />
    ))}

    {swingLabels.map(([t, x, y, c]) => (
      <Mark key={t} x={x} y={y + 4} fill={c}>{t}</Mark>
    ))}
    <Mark x="6" y="268" fill="#666">361.80% (5049.24)</Mark>
    <Mark x="6" y="287" fill="#666">338.20% (5038.26)</Mark>
    <Mark x="650" y="221" fill="#806468">XAB Fib:  35%</Mark>
    <Mark x="650" y="234" fill="#806468">BC/XA:  44.1%</Mark>
    <Mark x="28" y="569" fill="#4a80c0" $bold>X</Mark>
    <Mark x="522" y="269" fill="#4a80c0" $bold>A</Mark>
    <Mark x="580" y="385" fill="#4a80c0" $bold>B</Mark>
    <Mark x="644" y="243" fill="#4a80c0" $bold>C</Mark>
    <Mark x="598" y="599" fill="#108020">Shark (0)</Mark>
    <Mark x="-3" y="624" fill="#a8a8a8">neoHarmonics.com (E-mini NASDAQ-100 Futures)</Mark>
    {levels.map(([t, y, c]) => (
      <Mark key={t} x="823" y={y + 4} fill={c} $bold>{t}</Mark>
    ))}
    <Mark x="823" y="614" fill="#108084">Line In Sand@4850</Mark>

    {/* RSI pane */}
    <path d="M0 713H1351M0 844H1351" stroke="#556b2f" strokeWidth="2" />
    <path d="M0 778.500H1351" stroke="#555" strokeDasharray="3 1" />
    <path d={line(third(rsi as Pt[], 641, 1))} fill="none" stroke="#888" strokeWidth="1.200" strokeDasharray="1 1" />
    <path d={line(third(rsi as Pt[], 640))} fill="none" stroke="#444" strokeWidth="1.800" strokeLinejoin="bevel" />
    {noteBlack.map((t, i) => (
      <Mark key={t} x="1070" y={712 + i * 15} textAnchor="middle" fill="#000" $size={13} $bold>{t}</Mark>
    ))}
    {noteRed.map((t, i) => (
      <Mark key={t} x="1086" y={800 + i * 15} textAnchor="middle" fill="#f80808" $size={13} $bold>{t}</Mark>
    ))}

    {/* stochastic pane */}
    <path d="M0 913H1351" stroke="#800000" strokeWidth="2" />
    <path d="M7 919H1351" stroke="#ff0000" strokeWidth="2" strokeDasharray="2 2" />
    <path d="M0 943.500H1351" stroke="#666" />
    <path d="M0 966H1351" stroke="#008000" strokeWidth="2" strokeDasharray="2 2" />
    <path d="M0 972H1351" stroke="#006400" strokeWidth="2" />
    {stochRuns.map((r, i) => (
      <path key={i} d={r.d} stroke={r.color} strokeWidth="1.900" strokeLinecap="round" />
    ))}
    <Mark x="0" y="992" fill="#222">2017 NinjaTrader, LLC</Mark>

    {/* axes */}
    <path d="M0 644.500H1413M0 884.500H1413M0 994.500H1351.500V122" fill="none" stroke="#000" />
    {dateTicks.map((x) => (
      <path key={x} d={`M${x + 0.5} 995v6`} stroke="#000" />
    ))}
    {dates.map(([t, x]) => (
      <Mark key={t} x={x} y="1011" textAnchor="middle" fill="#222">{t}</Mark>
    ))}
    {Array.from({ length: 15 }, (_, i) => 5120 - i * 20).map((p, i) => (
      <g key={p}>
        <path d={`M1352 ${151.5 + i * 34}h5`} stroke="#000" />
        <Mark x="1359" y={156 + i * 34} fill="#222">{p.toFixed(2)}</Mark>
      </g>
    ))}
    {([["80", 680], ["70", 713], ["60", 746], ["50", 778], ["40", 811], ["30", 844], ["20", 877], ["100", 913], ["50", 943], ["0", 972]] as [string, number][]).map(([t, y]) => (
      <g key={y}>
        <path d={`M1352 ${y + 0.5}h5`} stroke="#000" />
        <Mark x="1359" y={y + 5} fill="#222">{t}</Mark>
      </g>
    ))}
    <AxisTag y={274} w={43} fill="#b0b0b0" ink="#000">5047.33</AxisTag>
    <AxisTag y={263} w={43} fill="#ffff78" ink="#222">5054.00</AxisTag>
    <AxisTag y={281} w={43} fill="#ff00ff">5043.65</AxisTag>
    <AxisTag y={299} w={43} fill="#ff0000">5032.53</AxisTag>
    <AxisTag y={750} w={31} fill="#404040">58.73</AxisTag>
    <AxisTag y={757} w={24} fill="#404040">56.5</AxisTag>
    <AxisTag y={919} w={31} fill="#ff0000">89.38</AxisTag>
    <path d="M1321.500 127.500v20l14-10ZM1338.500 127.500h3v20h-3Z" fill="none" stroke="#000" strokeWidth="1.300" />
    <rect x="1399.500" y="119.500" width="12" height="12" fill="#fff" stroke="#000" />
    <Mark x="1402" y="130" fill="#000">F</Mark>
  </Canvas>
);

/* ------------------------------------------------------------------ */
/* Market profile chart                                                */
/* ------------------------------------------------------------------ */

const profileLeft: Pt[] = [[187,185],[183,200],[170,220],[150,240],[130,258],[105,275],[90,292],[75,308],[72,325],[58,342],[45,362],[52,385],[44,405],[30,430],[45,455],[60,485],[90,492],[112,502],[118,515],[105,530],[75,540],[52,552],[65,575],[60,600],[45,615],[35,632],[60,655],[66,680],[100,690],[122,705],[145,722],[150,745],[165,770],[178,795],[176,825],[187,825]];
const profileRight: Pt[] = [[674,50],[655,62],[638,75],[615,100],[610,115],[585,125],[560,145],[535,155],[528,172],[515,185],[535,195],[532,215],[540,235],[502,252],[515,270],[512,290],[498,308],[512,325],[505,345],[520,352],[480,370],[455,392],[470,400],[500,420],[495,435],[520,445],[530,462],[590,462],[592,490],[620,512],[640,540],[655,570],[672,592],[674,592]];

const prices: Pt[] = [
  [14,430],[20,480],[26,400],[32,370],[38,310],[44,350],[50,450],[56,530],[62,560],[68,570],[74,620],[80,580],[86,600],[92,620],[98,640],[104,625],[110,710],[116,640],[122,620],[128,630],[134,640],[140,580],[146,550],[152,560],[158,545],[164,500],[170,450],[176,435],[182,440],[188,440],
  [194,470],[200,350],[206,220],[212,230],[218,300],[224,220],[230,120],[236,170],[242,180],[248,130],[254,160],[260,210],[266,200],[272,240],[278,370],[284,410],[290,430],[296,320],[302,280],[308,320],[314,350],[320,370],[326,400],[332,310],[338,300],[344,340],[350,330],[356,335],[362,350],[368,530],[374,460],[380,410],[386,410],[392,400],[398,410],[404,400],[410,400],[416,430],[422,400],[428,400],[434,410],[440,470],[446,490],[452,420],[458,410],[464,470],[470,510],[476,480],[482,460],[488,430],[494,435],[500,440],[506,455],[512,420],[518,430],[524,430],[530,420],[536,370],[542,350],[548,370],[554,370],[560,400],[566,380],[572,450],[578,450],[584,410],[590,380],[596,360],[602,340],[608,280],[614,280],[620,310],[626,300],[632,280],[638,240],[644,230],[650,200],[656,170],[662,190],[668,80],[674,80],
];

const profileCurve: Pt[] = [
  [1285,158],[1270,185],[1280,205],[1272,235],[1258,260],[1255,310],[1260,350],[1265,400],[1270,440],[1265,475],[1250,500],[1228,540],[1215,570],[1200,605],[1190,640],[1190,695],[1215,710],[1228,730],[1237,760],[1205,780],[1203,800],[1216,830],[1206,860],[1212,890],[1235,920],[1245,950],[1247,980],[1252,1030],[1240,1075],[1230,1095],[1215,1130],[1232,1145],[1238,1180],[1228,1220],[1228,1290],[1240,1330],[1242,1400],[1248,1430],[1252,1500],[1258,1530],[1280,1560],[1286,1600],[1266,1630],[1280,1700],[1282,1760],[1288,1850],[1286,1900],[1292,1950],[1280,2020],[1286,2070],[1296,2150],[1288,2200],[1298,2270],[1290,2360],[1284,2430],[1292,2480],[1296,2560],[1294,2600],[1284,2660],[1270,2690],[1266,2728],
];
const curve: Pt[] = profileCurve.slice(0, -1).flatMap(([x, y], i) => {
  const px = 1400 + x / 3, py = 80 + y / 3;
  const [qx, qy] = profileCurve[i + 1];
  const hy = 80 + (y + qy) / 6;
  return [[px, py], [px + (noise(i) - 0.5) * 2, hy], [1400 + (x + qx) / 6, hy]] as Pt[];
});

type Level = { y: number; color: string; label?: string; dim?: boolean; band?: [number, number, string]; at?: number };
const ladder: Level[] = [
  { y: 122, color: "#8a5a00", label: "5061.50", dim: true, at: 122 },
  { y: 107, color: "#e81010", label: "5063.25", band: [99, 17, "#400000"] },
  { y: 172, color: "#800000", label: "5055.75", dim: true },
  { y: 249, color: "#b0b000", label: "5046.75", band: [241, 16, "#ffff0044"] },
  { y: 302, color: "#00e818", label: "5040.50", at: 301 },
  { y: 292, color: "#900808", label: "5041.75", dim: true },
  { y: 414, color: "#a8a000", label: "5027.50", band: [409, 10, "#ffff0044"] },
  { y: 504, color: "#00d820", label: "5016.75", at: 503 },
  { y: 499, color: "#005008", label: "5017.50", band: [491, 18, "#00200088"] },
  { y: 639, color: "#700000", label: "5001.25", dim: true },
  { y: 692, color: "#f00000", label: "4995.00" },
  { y: 733, color: "#a0a000", label: "4990.25", band: [726, 16, "#ffff0044"] },
  { y: 787, color: "#f00000", label: "4984.00" },
  { y: 850, color: "#00901a", label: "4976.50", band: [842, 18, "#002000"] },
  { y: 909, color: "#f00000", label: "4969.75" },
];

/* text, marker y, marker colour */
const leftMarks: [string, number, string][] = [
  ["YVAH 5053.25", 193, "#4682b4"], ["YVAL 5051.25", 210, "#4682b4"], ["HoD 5050.00", 221, "#d8d8d8"], ["IBH 5046.25", 253, "#ffff00"],
  ["HG 5045.00", 264, "#00e8f0"], ["Open 5039.75", 309, "#00f000"], ["Close 5040.50", 302, "#ffa500"], ["Mid 5037.50", 328, "#d8d8d8"],
  ["IBL 5025.00", 435, "#ffff00"], ["LoD 5025.00", 435, "#d8d8d8"],
];
const rightMarks: [string, number, string][] = [
  ["HoD 5055.25", 176, "#d8d8d8"], ["IBH 5054.50", 182, "#ffff00"], ["YVAH 5046.50", 251, "#5f8f88"], ["Open 5047.25", 244, "#40f010"],
  ["Mid 5044.75", 266, "#d8d8d8"], ["HG 5044.00", 272, "#00e8f0"], ["IBL 5037.25", 330, "#ffff00"], ["LoD 5034.00", 358, "#d8d8d8"], ["YVAL 5034.25", 356, "#4682b4"],
];

const PriceMark = ({ x, y, color, children }: { x: number; y: number; color: string; children: string }) => (
  <g fill={color}>
    <path d={`M${x} ${y}l8-5v10Z`} />
    <Mark x={x + 12} y={y + 4} $size={12} $ui>{children}</Mark>
  </g>
);

const ProfileChart = () => (
  <Canvas $dark viewBox="1414 48 506 978" preserveAspectRatio="xMaxYMin meet" role="img" aria-label="NQ 03-17 market profile">
    <defs>
      <linearGradient id="profile-left" x1="0" y1="0" x2="0" y2="1">
        <stop offset="0" stopColor="#383838" />
        <stop offset=".2" stopColor="#606060" />
        <stop offset=".22" stopColor="#929292" />
        <stop offset=".45" stopColor="#bcbcbc" />
        <stop offset=".6" stopColor="#989898" />
        <stop offset=".78" stopColor="#606060" />
        <stop offset="1" stopColor="#2c2c2c" />
      </linearGradient>
      <linearGradient id="profile-right" x1="0" y1="0" x2="0" y2="1">
        <stop offset="0" stopColor="#404040" />
        <stop offset=".285" stopColor="#707070" />
        <stop offset=".29" stopColor="#949494" />
        <stop offset=".6" stopColor="#c6c6c6" />
        <stop offset=".76" stopColor="#acacac" />
        <stop offset=".765" stopColor="#545454" />
        <stop offset="1" stopColor="#242424" />
      </linearGradient>
      <pattern id="rows" width="4" height="2" patternUnits="userSpaceOnUse">
        <rect width="4" height="1" fill="#000" fillOpacity=".14" />
      </pattern>
      <clipPath id="plot"><rect x="1414" y="48" width="422" height="942" /></clipPath>
    </defs>

    <g clipPath="url(#plot)">
      <path d={line(third(profileLeft, 160, 1410)) + "Z"} fill="url(#profile-left)" />
      <path d={line(third(profileLeft, 160, 1410)) + "Z"} fill="url(#rows)" />
      <path d={line(third(profileRight, 160, 1410)) + "Z"} fill="url(#profile-right)" />
      <path d={line(third(profileRight, 160, 1410)) + "Z"} fill="url(#rows)" />

      <g fill="none">
        <path d="M1414 193.500h58M1414 210.500h58M1472 356.500h162" stroke="#2c4a68" />
        <path d="M1414 221.500h58M1472 176.500h162M1472 358.500h162M1414 435.500h58" stroke="#666" />
        <path d="M1472 182.500h155M1472 330.500h145M1414 253.500h58" stroke="#848400" />
        <path d="M1414 264.500h58M1472 272.500h162" stroke="#008488" />
        <path d="M1480 244.500h100" stroke="#209010" />
        <path d="M1414 304.500h54M1570 292.500h40" stroke="#c80000" strokeWidth="2.500" />
        <path d="M1421 296.500h46v6M1507 236.500h3l2 3 1 40h18v34M1571 289.500h30v3" stroke="#8c0c0c" strokeDasharray="3 1" />
      </g>

      {ladder.map((l) => (
        <g key={l.label}>
          {l.band && <rect x="1414" y={l.band[0]} width="365" height={l.band[1]} fill={l.band[2]} />}
          <path d={`M1414 ${l.y + 0.5}H1777`} stroke={l.color} />
        </g>
      ))}
      <path d="M1414 253.500H1777" stroke="#606000" />
      <path d="M1414 414.500H1777" stroke="#ffa000" />
      <path d="M1414 731.500H1777" stroke="#50f000" />

      <g fill="#8c8c8c">
        {["∑ 134 v 159K (84%)", "↕ 21.25 v 41.75pts (51%)", "] 17.25 v 18.00pts (95%)", "Gap: +6.75pts"].map((t, i) => (
          <Mark key={t} x="1631" y={368 + i * 16} textAnchor="end" $size={12} $ui>{t}</Mark>
        ))}
        {["∑ 160K (91%)", "↕ 24.00pts (59%)", "] 22.50pts (117%)", "Gap: -10.5pts"].map((t, i) => (
          <Mark key={t} x="1470" y={445 + i * 16} textAnchor="end" $size={12} $ui>{t}</Mark>
        ))}
      </g>
      {leftMarks.map(([t, y, c]) => (
        <PriceMark key={t} x={1475} y={y} color={c}>{t}</PriceMark>
      ))}
      {rightMarks.map(([t, y, c]) => (
        <PriceMark key={t} x={1637} y={y} color={c}>{t}</PriceMark>
      ))}

      {prices.map(([x, y], i) => {
        const prev = prices[i - 1]?.[1] ?? y;
        const up = y < prev;
        const cx = Math.round(1410 + x / 3);
        const top = Math.round(160 + Math.min(y, prev) / 3);
        const h = Math.max(3, Math.round(Math.abs(y - prev) / 3 + 2));
        const above = Math.round(2 + noise(i) * 9);
        const below = Math.round(2 + noise(i + 500) * 9);
        return (
          <g key={i}>
            <rect x={cx} y={top - above} width="1" height={h + above + below} fill="#fff" />
            <rect x={cx} y={top} width={h > 6 ? 2 : 1} height={h} fill={up ? "#00d818" : "#f00808"} />
          </g>
        );
      })}

      <path d={line(curve)} fill="none" stroke="#d8d8d8" strokeWidth="1.200" />
    </g>

    {ladder.map((l) => {
      const y = l.at ?? l.y;
      return (
        <g key={l.label}>
          <path d={`M1777 ${y + 0.5}l5-9.500h53.500v19h-53.500Z`} fill="#000" stroke={l.color} />
          <Mark x="1785" y={y + 4} fill={l.dim ? "#8a8a8a" : "#fff"} $size={13}>{l.label}</Mark>
        </g>
      );
    })}

    <rect x="1698.500" y="940.500" width="127" height="40" fill="#000" stroke="#b8b8b8" strokeWidth="1.500" />
    <Mark x="1761" y="956" textAnchor="middle" fill="#fff" $size={13}>Composite Start:</Mark>
    <Mark x="1761" y="971" textAnchor="middle" fill="#fff" $size={13}>7/1/2016 (201d)</Mark>

    <path d="M1414 990.500H1835.500V53M1474.500 991v6" fill="none" stroke="#c8c8c8" />
    <Mark x="1474" y="1011" textAnchor="middle" fill="#c4c4c4" $size={16}>1/18</Mark>
    {Array.from({ length: 21 }, (_, i) => 5065 - i * 5).map((p, i) => {
      const y = Math.round(92 + i * 42.9);
      return (
        <g key={p}>
          <path d={`M1836 ${y + 0.5}h6`} stroke="#c8c8c8" />
          <Mark x="1844" y={y + 6} fill="#c4c4c4" $size={16}>{p.toFixed(2)}</Mark>
        </g>
      );
    })}
    <path d="M1837 187l8-9h63.500v18h-63.500Z" fill="#ffff00" stroke="#ddd" />
    <Mark x="1848" y="192" fill="#222" $size={16}>5054.00</Mark>
    <path d="M1837 292l8-9h63.500v18h-63.500Z" fill="#8b0000" stroke="#ddd" />
    <Mark x="1848" y="298" fill="#f0f0f0" $size={16}>5041.75</Mark>
    <rect x="1900.500" y="50.500" width="18" height="18" fill="#000" stroke="#d8d8d8" />
    <Mark x="1905" y="66" fill="#d0d0d0" $size={16}>F</Mark>
  </Canvas>
);

const Chevron = () => (
  <svg width="7" height="10" viewBox="0 0 7 10" aria-hidden="true">
    <path d="M1 1l4 4-4 4" fill="none" stroke="currentColor" strokeWidth="2" />
  </svg>
);

export default function App() {
  return (
    <>
      <Global />
      <Desktop>
        <BackWindow>
          <TitleBar $back>
            <TitleIcon $back><ChartGlyph /></TitleIcon>
            <Title $back>NQ 03-17 (5 Min)  1/18/2017</Title>
            <WindowControls back />
          </TitleBar>
          <Bar $kind="back" />
          <ChartArea $dark><ProfileChart /></ChartArea>
          <ScrollTrack $back>
            <ScrollThumb $back />
            <ScrollButton aria-label="Scroll right"><Chevron /></ScrollButton>
          </ScrollTrack>
        </BackWindow>

        <FrontWindow>
          <TitleBar>
            <TitleIcon><ChartGlyph /></TitleIcon>
            <Title>NQ 03-17 (Structural Trading Renko 20 Tick)  1/18/2017</Title>
            <WindowControls />
          </TitleBar>
          <Bar $kind="brand">
            <Brand href="#">
              <svg width="17" height="17" viewBox="0 0 17 17" aria-hidden="true">
                <rect width="17" height="17" rx="2" fill="#2a9fe0" />
                <path d="M3 4l3 3v6M6 9q3-4 5 0v5M11 8l3-3" fill="none" stroke="#fff" strokeWidth="1.800" />
              </svg>
              neoHarmonics
            </Brand>
            <Sep />
            <BadgeTools names={["H", "levels", "Z", "alert", "shot"]} />
            <Sep /><Sep />
            <BadgeTools names={["magnet"]} />
            <Sep />
            <BadgeTools names={["note"]} />
            <Tool aria-label="Alternate">
              <svg width="17" height="17" viewBox="0 0 17 17" aria-hidden="true">
                <circle cx="8.500" cy="8.500" r="7.600" fill="#6cbde8" stroke="#345" strokeWidth="1.200" />
                <path d="M2 9l2-5 2 5M3 7h2M7.500 4v5h3M10 4.500h5M12.500 4.500V9" fill="none" stroke="#e8e020" strokeWidth="1.800" />
                <path d="M5 11.500h7M5 14h7" stroke="#e8e020" />
              </svg>
            </Tool>
            <Sep />
            <BadgeTools names={["swing", "bars", "fib", "harm"]} />
            <Sep />
            <TextButton>Daily</TextButton>
            <TextButton>Weekly</TextButton>
            <TextButton>Monthly</TextButton>
          </Bar>
          <Bar $kind="draw">
            <Tools items={drawTools} />
            <Vendor href="#">HTech.net</Vendor>
          </Bar>
          <Bar $kind="series">
            <Picker>
              <PickerSelect aria-label="Instrument"><option>NQ 03-17</option></PickerSelect>
              <Caret />
            </Picker>
            <Picker>
              <PickerSelect aria-label="Bar type"><option>Structural Trading Renko 20 Tick</option></PickerSelect>
              <Caret />
            </Picker>
            <Tools items={seriesTools} light />
          </Bar>
          <ChartArea><RenkoChart /></ChartArea>
          <ScrollTrack>
            <ScrollThumb />
            <ScrollButton aria-label="Scroll right"><Chevron /></ScrollButton>
          </ScrollTrack>
        </FrontWindow>
      </Desktop>
    </>
  );
}
